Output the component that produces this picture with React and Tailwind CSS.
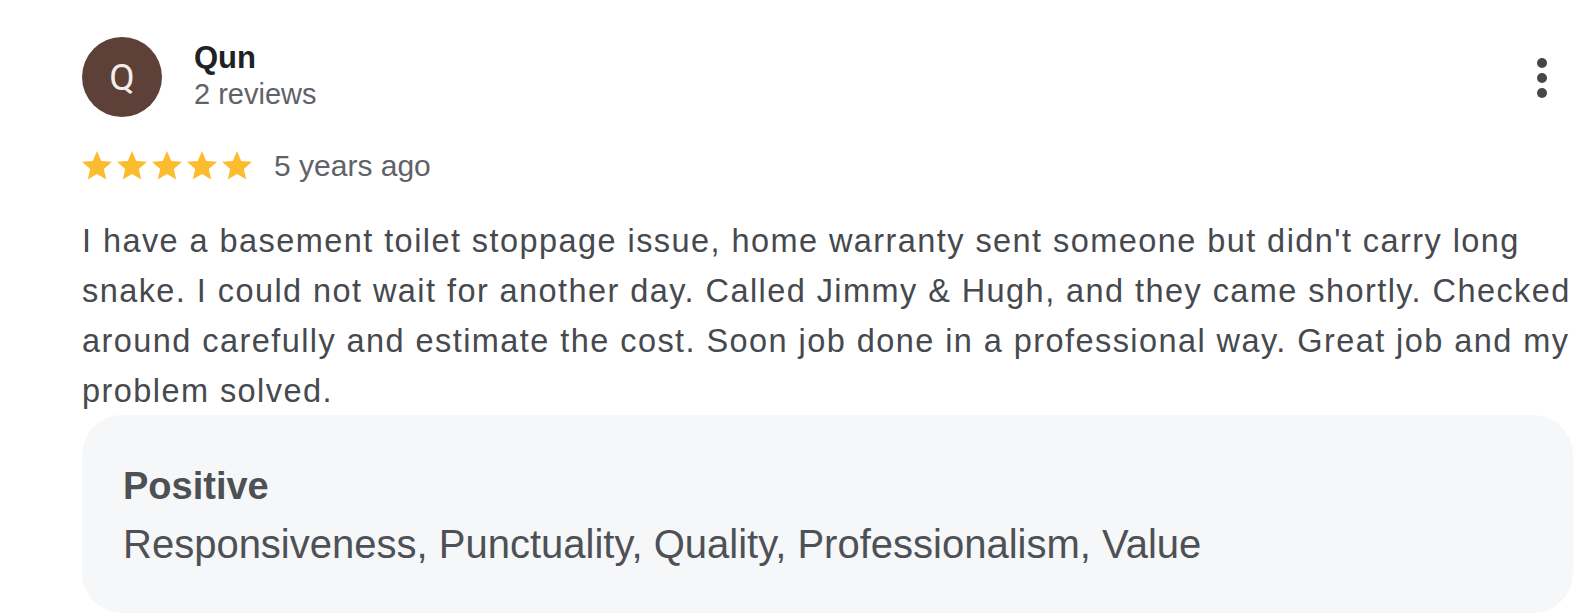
import React from 'react';

const STAR = "M12 17.27L18.18 21l-1.64-7.03L22 9.24l-7.19-.61L12 2 9.19 8.63 2 9.24l5.46 4.73L5.82 21z";

function Star() {
  return (
    <svg viewBox="2 2 20 19" width="30" height="28.5" className="shrink-0">
      <path d={STAR} fill="#fbbc2e" />
    </svg>
  );
}

export default function App() {
  const review = {
    name: "Qun",
    initial: "Q",
    count: "2 reviews",
    when: "5 years ago",
    text: "I have a basement toilet stoppage issue, home warranty sent someone but didn't carry long snake. I could not wait for another day. Called Jimmy & Hugh, and they came shortly. Checked around carefully and estimate the cost. Soon job done in a professional way. Great job and my problem solved.",
    positive: "Responsiveness, Punctuality, Quality, Professionalism, Value",
  };

  return (
    <div className="w-[1582px] h-[614px] overflow-hidden bg-white pl-[82px] pr-[9px] pt-[37px] font-['Liberation_Sans',Arial,sans-serif]">
      <div className="flex items-start">
        <div className="w-[80px] h-[80px] rounded-full bg-[#5d4037] flex items-center justify-center shrink-0">
          <span className="font-['Roboto',sans-serif] text-[37px] leading-none text-[#f4eeea]">{review.initial}</span>
        </div>
        <div className="ml-[32px] mt-[3px] flex-1">
          <div className="text-[31px] leading-[36px] font-bold text-[#202124]">{review.name}</div>
          <div className="text-[29px] leading-[36px] text-[#5f6368]">{review.count}</div>
        </div>
        <button className="mt-[21px] mr-[26px] flex flex-col gap-[5px]">
          <span className="w-[10px] h-[10px] rounded-full bg-[#474747]" />
          <span className="w-[10px] h-[10px] rounded-full bg-[#474747]" />
          <span className="w-[10px] h-[10px] rounded-full bg-[#474747]" />
        </button>
      </div>

      <div className="mt-[28px] h-[40px] flex items-center">
        <div className="flex gap-[5px]">
          <Star /><Star /><Star /><Star /><Star />
        </div>
        <span className="ml-[22px] text-[30px] text-[#5f6368]">{review.when}</span>
      </div>

      <p className="mt-[31px] text-[32.5px] tracking-[1.43px] leading-[50px] text-[#46494e]">{review.text}</p>

      <div className="-mt-[1px] h-[198px] rounded-[40px] bg-[#f6f7f9] pl-[41px] pt-[42px]">
        <div className="text-[38px] leading-[58px] font-bold text-[#4d5156]">Positive</div>
        <div className="text-[40px] leading-[58px] text-[#4d5156]">{review.positive}</div>
      </div>
    </div>
  );
}
